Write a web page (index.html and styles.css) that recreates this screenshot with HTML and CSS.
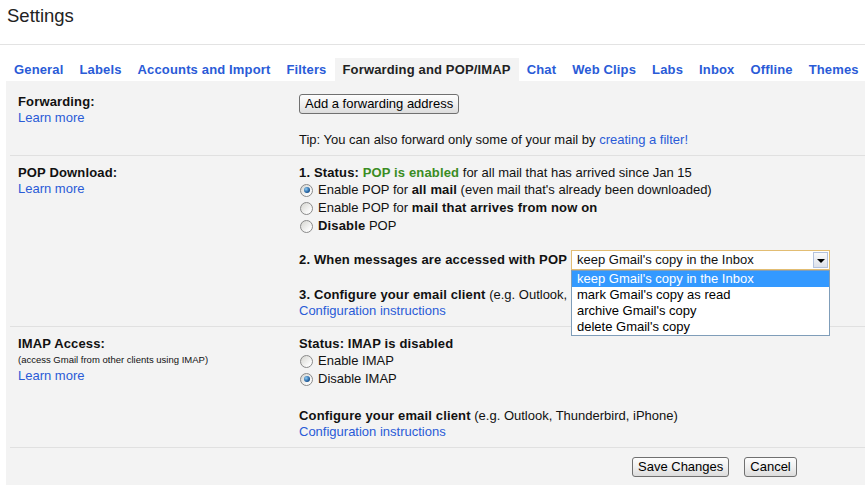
FILE: index.html
```html
<!DOCTYPE html>
<html lang="en">
  <head>
    <title>Settings</title>
    <link rel="stylesheet" href="styles.css">
  </head>
  <body>
    <div class="page-title">Settings</div>
    <div class="title-rule"></div>

    <div class="tabs">
      <a class="tab" href="#">General</a>
      <a class="tab" href="#">Labels</a>
      <a class="tab" href="#">Accounts and Import</a>
      <a class="tab" href="#">Filters</a>
      <a class="tab active" href="#">Forwarding and POP/IMAP</a>
      <a class="tab" href="#">Chat</a>
      <a class="tab" href="#">Web Clips</a>
      <a class="tab" href="#">Labs</a>
      <a class="tab" href="#">Inbox</a>
      <a class="tab" href="#">Offline</a>
      <a class="tab" href="#">Themes</a>
    </div>

    <div class="panel">
      <div class="section first">
        <div class="label-col">
          <div class="label">Forwarding:</div>
          <a class="link" href="#">Learn more</a>
        </div>
        <div class="content-col">
          <button class="btn">Add a forwarding address</button>
          <div class="tip">Tip: You can also forward only some of your mail by <a class="link" href="#">creating a filter!</a></div>
        </div>
      </div>

      <div class="section">
        <div class="label-col">
          <div class="label">POP Download:</div>
          <a class="link" href="#">Learn more</a>
        </div>
        <div class="content-col">
          <div class="line"><b>1. Status:</b> <b class="green">POP is enabled</b> for all mail that has arrived since Jan 15</div>
          <div class="radio-row"><span class="radio checked"></span>Enable POP for&nbsp;<b>all mail</b>&nbsp;(even mail that's already been downloaded)</div>
          <div class="radio-row"><span class="radio"></span>Enable POP for&nbsp;<b>mail that arrives from now on</b></div>
          <div class="radio-row"><span class="radio"></span><b>Disable</b>&nbsp;POP</div>

          <div class="select-row">
            <b>2. When messages are accessed with POP</b>
            <div class="select">
              <span class="select-text">keep Gmail's copy in the Inbox</span>
              <span class="select-arrow"></span>
              <ul class="select-list">
                <li class="selected">keep Gmail's copy in the Inbox</li>
                <li>mark Gmail's copy as read</li>
                <li>archive Gmail's copy</li>
                <li>delete Gmail's copy</li>
              </ul>
            </div>
          </div>

          <div class="line configure"><b>3. Configure your email client</b> (e.g. Outlook, Eudora, Netscape Mail)</div>
          <a class="link" href="#">Configuration instructions</a>
        </div>
      </div>

      <div class="section">
        <div class="label-col">
          <div class="label">IMAP Access:</div>
          <div class="small">(access Gmail from other clients using IMAP)</div>
          <a class="link" href="#">Learn more</a>
        </div>
        <div class="content-col">
          <div class="line"><b>Status: IMAP is disabled</b></div>
          <div class="radio-row"><span class="radio"></span>Enable IMAP</div>
          <div class="radio-row"><span class="radio checked"></span>Disable IMAP</div>
          <div class="line configure imap"><b>Configure your email client</b> (e.g. Outlook, Thunderbird, iPhone)</div>
          <a class="link" href="#">Configuration instructions</a>
        </div>
      </div>

      <div class="footer">
        <button class="btn">Save Changes</button>
        <button class="btn">Cancel</button>
      </div>
    </div>
  </body>
</html>
```

FILE: styles.css
```css
body {
  margin: 0;
  font-family: "Liberation Sans", Arial, sans-serif;
  font-size: 13px;
  line-height: 16px;
  color: #111;
  background-color: #fff;
}

b {
  letter-spacing: 0.15px;
}

.page-title {
  font-size: 18.5px;
  line-height: 22px;
  padding: 5px 0 17px 7px;
  color: #222;
}

.title-rule {
  height: 1px;
  background-color: #e3e3e3;
}

.tabs {
  display: flex;
  margin-top: 13px;
  padding-left: 6px;
}

.tab {
  font-weight: bold;
  letter-spacing: 0.15px;
  padding: 4px 8px 3px;
  color: #2a5bd7;
  text-decoration: none;
  white-space: nowrap;
}

.tab.active {
  background-color: #f3f3f3;
  color: #222;
}

.panel {
  margin-left: 6px;
  background-color: #f3f3f3;
  padding-bottom: 10px;
}

.section {
  display: flex;
  margin-left: 4px;
  padding: 9px 0 7px 8px;
  border-top: 1px solid #e0e0e0;
}

.section.first {
  border-top: none;
  padding-top: 13px;
}

.label-col {
  width: 281px;
  flex-shrink: 0;
  display: flex;
  flex-direction: column;
  align-items: flex-start;
}

.label {
  font-weight: bold;
  letter-spacing: 0.15px;
}

.small {
  font-size: 9.5px;
}

.content-col {
  flex: 1;
  display: flex;
  flex-direction: column;
  align-items: flex-start;
}

.link {
  color: #2a5bd7;
  text-decoration: none;
}

.green {
  color: #3a8c23;
}

.btn {
  font-family: "Liberation Sans", Arial, sans-serif;
  font-size: 13px;
  line-height: 18px;
  height: 20px;
  padding: 0 5px;
  color: #000;
  border: 1px solid #707070;
  border-radius: 3px;
  background: linear-gradient(#fdfdfd, #f0f0f0 50%, #dcdcdc);
}

.tip {
  margin-top: 18px;
}

.radio-row {
  display: flex;
  align-items: center;
  height: 18px;
  white-space: nowrap;
}

.radio {
  width: 11px;
  height: 11px;
  margin: 0 5px 0 1px;
  border: 1px solid #8a8a8a;
  border-radius: 50%;
  background: linear-gradient(135deg, #d5d5d0, #fafafa 75%);
  display: flex;
  align-items: center;
  justify-content: center;
}

.radio.checked::after {
  content: "";
  width: 6px;
  height: 6px;
  border-radius: 50%;
  background: radial-gradient(circle at 35% 35%, #8fcdf5, #215f9f 60%, #12385f);
}

.select-row {
  display: flex;
  align-items: center;
  height: 20px;
  margin-top: 15px;
  white-space: nowrap;
}

.select {
  position: relative;
  margin-left: 4px;
  width: 259px;
  height: 20px;
  box-sizing: border-box;
  border: 1px solid #e2bd73;
  background-color: #fff;
  display: flex;
  align-items: center;
  justify-content: space-between;
}

.select-text {
  padding-left: 5px;
}

.select-arrow {
  width: 15px;
  height: 16px;
  margin-right: 1px;
  border: 1px solid #b3c2dd;
  box-sizing: border-box;
  background: linear-gradient(#fafafa, #dde1ea);
  position: relative;
}

.select-arrow::after {
  content: "";
  position: absolute;
  left: 3px;
  top: 6px;
  border-left: 4px solid transparent;
  border-right: 4px solid transparent;
  border-top: 4px solid #000;
}

.select-list {
  position: absolute;
  top: 19px;
  left: -1px;
  width: 259px;
  box-sizing: border-box;
  margin: 0;
  padding: 0;
  list-style: none;
  background-color: #fff;
  border: 1px solid #7f9db9;
  z-index: 2;
}

.select-list li {
  padding-left: 5px;
  line-height: 16px;
  color: #000;
}

.select-list li.selected {
  background-color: #3399ff;
  color: #fff;
}

.configure {
  margin-top: 17px;
  white-space: nowrap;
}

.configure.imap {
  margin-top: 20px;
}

.footer {
  display: flex;
  gap: 15px;
  margin-left: 4px;
  padding: 9px 0 0 622px;
  border-top: 1px solid #e0e0e0;
}
```
